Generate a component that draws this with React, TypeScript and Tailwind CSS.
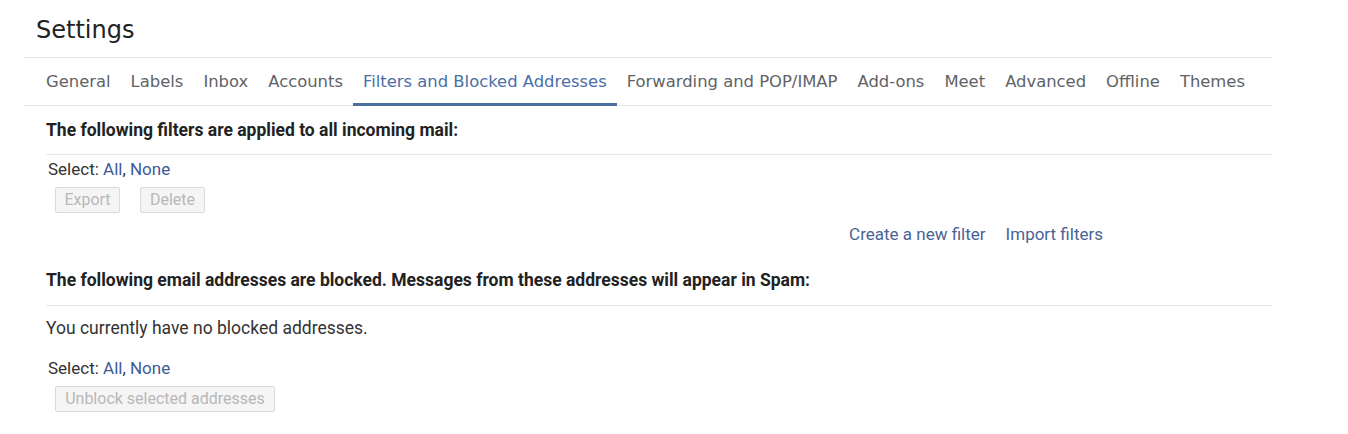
import React from "react";

const tabs = [
  "General",
  "Labels",
  "Inbox",
  "Accounts",
  "Filters and Blocked Addresses",
  "Forwarding and POP/IMAP",
  "Add-ons",
  "Meet",
  "Advanced",
  "Offline",
  "Themes",
];

function DisabledButton({ label, className = "" }: { label: string; className?: string }) {
  return (
    <div
      className={`h-[26px] flex items-center justify-center rounded-[2px] border border-[#dadada] bg-[#f5f5f5] text-[#b8b8b8] text-[16px] ${className}`}
    >
      {label}
    </div>
  );
}

function SelectRow({ className = "" }: { className?: string }) {
  return (
    <div className={`h-[18px] flex items-center pl-[2px] text-[17px] text-[#333] ${className}`}>
      <span>Select:&nbsp;</span>
      <span className="text-[#3d5a98]">All</span>
      <span>,&nbsp;</span>
      <span className="text-[#3d5a98]">None</span>
    </div>
  );
}

export default function App() {
  return (
    <div
      className="w-[1348px] h-[434px] bg-white overflow-hidden"
      style={{ fontFamily: "Roboto, 'Liberation Sans', Arial, sans-serif" }}
    >
      <div className="ml-[24px] w-[1248px]">
        <div
          className="h-[57px] flex items-center pl-[12px] pt-[2px] text-[24px] text-[#222]"
          style={{ fontFamily: "'DejaVu Sans', 'Open Sans', sans-serif" }}
        >
          Settings
        </div>
        <div
          className="h-[49px] flex border-t border-b border-[#e8e8e8] pl-[12px]"
          style={{ fontFamily: "'DejaVu Sans', 'Open Sans', sans-serif" }}
        >
          {tabs.map((t) => {
            const active = t === "Filters and Blocked Addresses";
            return (
              <div
                key={t}
                className={`h-[48px] -mb-px flex items-center px-[10px] text-[16.4px] whitespace-nowrap ${
                  active
                    ? "text-[#4a6fa8] border-b-[3px] border-[#4a6f9f] pt-[3px]"
                    : "text-[#5f6368]"
                }`}
              >
                {t}
              </div>
            );
          })}
        </div>
        <div className="ml-[22px]">
          <div className="h-[49px] flex items-center border-b border-[#e6e6e6] text-[17.5px] font-bold text-[#222]">
            The following filters are applied to all incoming mail:
          </div>
          <SelectRow className="mt-[6px]" />
          <div className="mt-[8px] ml-[9px] flex gap-[20px]">
            <DisabledButton label="Export" className="w-[65px]" />
            <DisabledButton label="Delete" className="w-[65px]" />
          </div>
          <div className="mt-[9px] h-[18px] flex justify-end pr-[169px] gap-[20px] text-[17px] text-[#4a6396]">
            <span>Create a new filter</span>
            <span>Import filters</span>
          </div>
          <div className="mt-[15px] h-[51px] flex items-center border-b border-[#e6e6e6] text-[17.5px] font-bold text-[#222] whitespace-nowrap">
            The following email addresses are blocked. Messages from these addresses will appear in Spam:
          </div>
          <div className="mt-[13px] h-[18px] flex items-center text-[17.5px] text-[#333]">
            You currently have no blocked addresses.
          </div>
          <SelectRow className="mt-[23px]" />
          <div className="mt-[8px] ml-[9px] flex">
            <DisabledButton label="Unblock selected addresses" className="w-[220px]" />
          </div>
        </div>
      </div>
    </div>
  );
}
